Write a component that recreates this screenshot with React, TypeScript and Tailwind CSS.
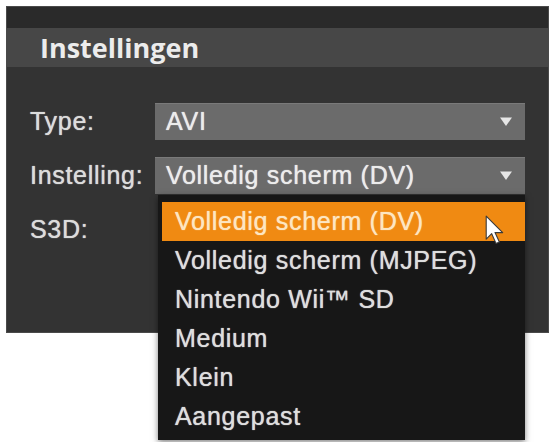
import React from "react";

const OPTIONS = [
  "Volledig scherm (DV)",
  "Volledig scherm (MJPEG)",
  "Nintendo Wii™ SD",
  "Medium",
  "Klein",
  "Aangepast",
];

const FONT = { fontFamily: '"Liberation Sans", Arial, sans-serif' };

function Arrow() {
  return (
    <svg width="14" height="11" viewBox="0 0 14 11" className="shrink-0">
      <path d="M1 1.5 H13 L7 10 Z" fill="#e6e6e6" />
    </svg>
  );
}

function Cursor() {
  return (
    <svg width="22" height="33" viewBox="0 0 20 30" className="absolute left-[326px] top-[20px]">
      <path
        d="M2 1 L2 22 L7 17 L11 26 L14 24.5 L10 16 L17 16 Z"
        fill="#ffffff"
        stroke="#3a3a3a"
        strokeWidth="1"
        strokeLinejoin="round"
      />
    </svg>
  );
}

function Select({ value }: { value: string }) {
  return (
    <div className="flex h-[37px] items-center justify-between bg-[#6b6b6b] pl-[11px] pr-[12px] shadow-[inset_0_1px_0_#7a7a7a]">
      <span className="text-[25px] tracking-[0.7px] text-[#ececec] [text-shadow:0_0_1px_#ececec]">{value}</span>
      <Arrow />
    </div>
  );
}

export default function App() {
  return (
    <div className="h-[442px] w-[553px] bg-white pl-[6px] pt-[6px]" style={FONT}>
      <div className="relative h-[327px] w-[543px] border border-[#4a4a4a] bg-[#333333]">
        <div className="h-[21px] bg-[#2a2a2a]" />
        <div className="flex h-[39px] items-center bg-[#474747] pl-[33px]">
          <span
            className="text-[27px] font-bold leading-none text-[#ececec]"
            style={{ fontFamily: '"Open Sans", "DejaVu Sans", sans-serif' }}
          >
            Instellingen
          </span>
        </div>
        <div className="grid grid-cols-[125px_370px] gap-y-[17px] pl-[23px] pt-[36px] text-[25px] tracking-[0.7px] text-[#dcdcdc] [text-shadow:0_0_1px_#dcdcdc]">
          <div className="flex h-[37px] items-center">Type:</div>
          <Select value="AVI" />
          <div className="flex h-[37px] items-center">Instelling:</div>
          <div className="relative">
            <Select value="Volledig scherm (DV)" />
            <div className="absolute left-[3px] top-[38px] z-10 h-[245px] w-[367px] bg-[#171717] pl-[4px] pt-[7px] shadow-[0_2px_6px_rgba(0,0,0,0.5)]">
              {OPTIONS.map((opt, i) => (
                <div
                  key={opt}
                  className={
                    i === 0
                      ? "flex h-[39px] items-center bg-[#f08a12] pl-[13px] text-[#fde6c2] [text-shadow:0_0_1px_#fde6c2]"
                      : "flex h-[39px] items-center pl-[13px] text-[#dedede]"
                  }
                >
                  {opt}
                </div>
              ))}
              <Cursor />
            </div>
          </div>
          <div className="flex h-[37px] items-center">S3D:</div>
          <div />
        </div>
      </div>
    </div>
  );
}
